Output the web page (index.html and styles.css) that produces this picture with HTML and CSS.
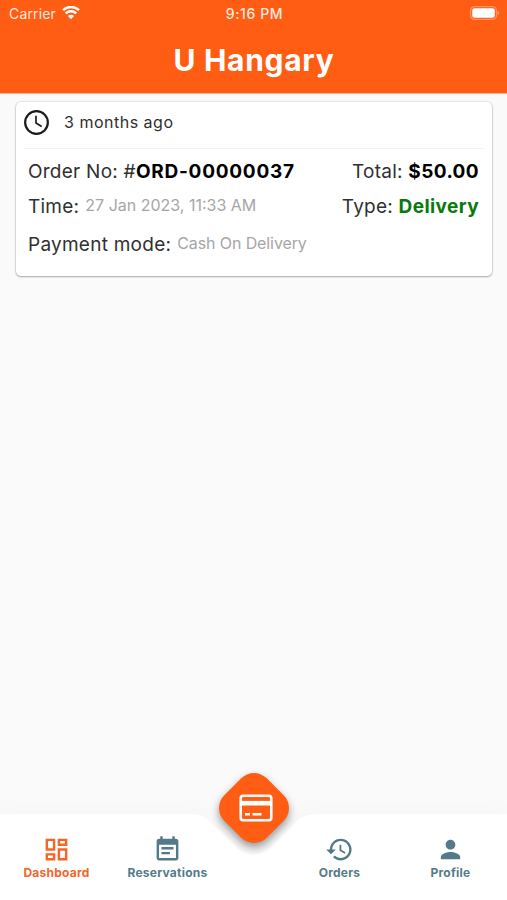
FILE: index.html
```
<!DOCTYPE html>
<html lang="en">
<head>
  <meta charset="UTF-8">
  <meta name="viewport" content="width=device-width, initial-scale=1.0">
  <title>U Hangary</title>
  <link rel="stylesheet" href="styles.css">
</head>
<body>

  <header class="header">
    <div class="status">
      <div class="carrier">
        <span>Carrier</span>
        <svg class="wifi" viewBox="0 0 18 14">
          <path d="M1 4.2a11.6 11.6 0 0 1 16 0M3.700 7.400a7.700 7.700 0 0 1 10.600 0" fill="none" stroke="currentColor" stroke-width="2.500"/>
          <path d="M9 13.200l-3.100-3.200a4.400 4.400 0 0 1 6.200 0z" fill="currentColor"/>
        </svg>
      </div>
      <span class="clock">9:16 PM</span>
      <svg class="battery" viewBox="0 0 30 14">
        <rect x=".6" y=".6" width="25.8" height="12.8" rx="3.8" fill="none" stroke="#fff" stroke-opacity=".35" stroke-width="1.2"/>
        <rect x="2.2" y="2.2" width="22.6" height="9.6" rx="2.4" fill="#fff"/>
        <path d="M27.6 4.6c2.2.8 2.2 4 0 4.8z" fill="#fff" fill-opacity=".35"/>
      </svg>
    </div>
    <h1 class="title">U Hangary</h1>
  </header>

  <main class="content">
    <div class="card">
      <div class="card-head">
        <svg class="card-clock" viewBox="0 0 24 24">
          <circle cx="12" cy="12" r="10.9" fill="none" stroke="currentColor" stroke-width="2.1"/>
          <path d="M11.5 5.500v6.900l5.400 3.400" fill="none" stroke="currentColor" stroke-width="1.600"/>
        </svg>
        <span class="ago">3 months ago</span>
      </div>
      <div class="row">
        <div class="order">Order No: #<b>ORD-00000037</b></div>
        <div class="total">Total: <b>$50.00</b></div>
      </div>
      <div class="row row-time">
        <div class="pair"><span class="time">Time:</span><span class="muted date">27 Jan 2023, 11:33 AM</span></div>
        <div class="type">Type: <b class="green">Delivery</b></div>
      </div>
      <div class="row row-pay">
        <div class="pair"><span class="pay">Payment mode:</span><span class="muted cash">Cash On Delivery</span></div>
      </div>
    </div>
  </main>

  <nav class="nav">
    <svg class="nav-bg" viewBox="0 0 507 110">
      <path d="M0 24H190C202 24 207 28 213 34L237 58Q253.500 71 270 58L294 34C300 28 305 24 317 24H507V110H0z" fill="#fff"/>
    </svg>
    <a class="tab active">
      <svg viewBox="0 0 24 24" fill="currentColor"><path d="M19 5v2h-4V5h4M9 5v6H5V5h4m10 8v6h-4v-6h4M9 17v2H5v-2h4M21 3h-8v6h8V3zM11 3H3v10h8V3zm10 8h-8v10h8V11zm-10 4H3v6h8v-6z"/></svg>
      <span>Dashboard</span>
    </a>
    <a class="tab">
      <svg viewBox="0 0 24 24" fill="currentColor"><path d="M17 10H7v2h10v-2zm2-7h-1V1h-2v2H8V1H6v2H5c-1.110 0-1.990.9-1.990 2L3 19c0 1.100.89 2 2 2h14c1.100 0 2-.9 2-2V5c0-1.100-.9-2-2-2zm0 16H5V8h14v11zm-5-5H7v2h7v-2z"/></svg>
      <span>Reservations</span>
    </a>
    <a class="tab tab-orders">
      <svg viewBox="0 0 24 24" fill="currentColor"><path d="M13 3c-4.970 0-9 4.030-9 9H1l3.890 3.890.07.14L9 12H6c0-3.870 3.130-7 7-7s7 3.130 7 7-3.130 7-7 7c-1.930 0-3.680-.79-4.940-2.060l-1.420 1.420C8.270 19.990 10.510 21 13 21c4.970 0 9-4.030 9-9s-4.030-9-9-9zm-1 5v5l4.280 2.540.72-1.210-3.500-2.080V8H12z"/></svg>
      <span>Orders</span>
    </a>
    <a class="tab">
      <svg viewBox="0 0 24 24" fill="currentColor"><path d="M12 12c2.210 0 4-1.790 4-4s-1.790-4-4-4-4 1.790-4 4 1.790 4 4 4zm0 2c-2.670 0-8 1.340-8 4v2h16v-2c0-2.660-5.330-4-8-4z"/></svg>
      <span>Profile</span>
    </a>
    <div class="fab">
      <svg viewBox="0 0 34 28" fill="none" stroke="#fff">
        <rect x="1.700" y="1.700" width="30.600" height="24.600" rx="2.500" stroke-width="2.600"/>
        <path d="M2 9.200h30" stroke-width="4.600"/>
        <path d="M6 20.200h5M13.500 20.200h9" stroke-width="2.600"/>
      </svg>
    </div>
  </nav>

</body>
</html>
```
FILE: styles.css
```
html, body {
  margin: 0;
  padding: 0;
}

body {
  display: flex;
  flex-direction: column;
  height: 100vh;
  overflow: hidden;
  background: #fafafa;
  color: #303030;
  font-family: Inter, "Liberation Sans", sans-serif;
}

.header {
  height: 93px;
  flex-shrink: 0;
  background: #ff5c14;
  border-bottom: 1px solid #ffb18d;
  color: #fff;
}

.status {
  display: grid;
  grid-template-columns: 1fr auto 1fr;
  align-items: center;
  height: 27px;
  padding: 0 7px 0 9px;
  font-size: 14px;
  color: #ffe9df;
}

.carrier {
  display: flex;
  align-items: center;
  gap: 6px;
  letter-spacing: 0.15px;
}

.wifi {
  width: 18px;
  height: 14px;
  margin-top: -1px;
  color: #fff;
}

.clock {
  font-size: 14px;
  font-weight: 500;
  letter-spacing: 0.6px;
}

.battery {
  width: 30px;
  height: 14px;
  margin-top: -1px;
  justify-self: end;
}

.title {
  margin: 14px 0 0;
  padding-left: 1px;
  text-align: center;
  font-size: 30px;
  line-height: 38px;
  font-weight: 700;
  letter-spacing: 0.7px;
}

.content {
  flex: 1;
  padding: 8px 15px 8px 16px;
}

.card {
  height: 174px;
  background: #fff;
  border-radius: 5px;
  box-shadow: 0 0 1px 1px rgba(0, 0, 0, 0.08), 0 1px 2px rgba(0, 0, 0, 0.28);
}

.card-head {
  display: flex;
  align-items: center;
  height: 46px;
  margin: 0 8px 7px;
  border-bottom: 1px solid #f3f3f3;
}

.card-clock {
  width: 25px;
  height: 25px;
  margin-top: -5px;
  color: #1c1c1c;
}

.ago {
  margin: -6px 0 0 15px;
  font-size: 16px;
  letter-spacing: 0.5px;
}

.row {
  display: flex;
  justify-content: space-between;
  align-items: center;
  height: 30px;
  padding: 0 13px 0 12px;
  font-size: 19px;
  letter-spacing: 0.25px;
  white-space: nowrap;
}

.row b {
  color: #000;
  font-weight: 700;
  letter-spacing: 0.4px;
}

.order b {
  letter-spacing: 0.75px;
}

.row .green {
  color: #087a0b;
}

.row-time {
  margin-top: 5px;
}

.row-pay {
  margin-top: 8px;
}

.pair {
  display: flex;
  align-items: center;
  gap: 6px;
}

.muted {
  margin-top: -2px;
  color: #a6a6a6;
  font-size: 16px;
  letter-spacing: 0;
}

.cash {
  letter-spacing: -0.1px;
}

.nav {
  position: relative;
  display: grid;
  grid-template-columns: repeat(2, 111px) 61px repeat(2, 111px);
  justify-content: center;
  height: 110px;
  flex-shrink: 0;
}

.nav-bg {
  position: absolute;
  left: 0;
  top: 0;
  width: 507px;
  height: 110px;
  filter: drop-shadow(0 -3px 10px rgba(0, 0, 0, 0.02));
}

.tab {
  position: relative;
  display: flex;
  flex-direction: column;
  align-items: center;
  padding-top: 45px;
  color: #547a88;
  font-size: 12px;
  font-weight: 700;
  letter-spacing: 0.25px;
}

.tab svg {
  width: 29px;
  height: 29px;
}

.tab span {
  line-height: 18px;
}

.tab.active {
  color: #f76426;
}

.tab-orders {
  grid-column: 4;
}

/* floating button over the notch */
.fab {
  position: absolute;
  left: 224px;
  top: -12px;
  display: flex;
  align-items: center;
  justify-content: center;
  width: 60px;
  height: 60px;
  border-radius: 18px;
  background: #ff5c14;
  box-shadow: 3px 3px 8px rgba(0, 0, 0, 0.4);
  transform: rotate(45deg);
}

.fab svg {
  width: 34px;
  height: 28px;
  flex-shrink: 0;
  transform: rotate(-45deg) translate(2px, 0);
}
```
